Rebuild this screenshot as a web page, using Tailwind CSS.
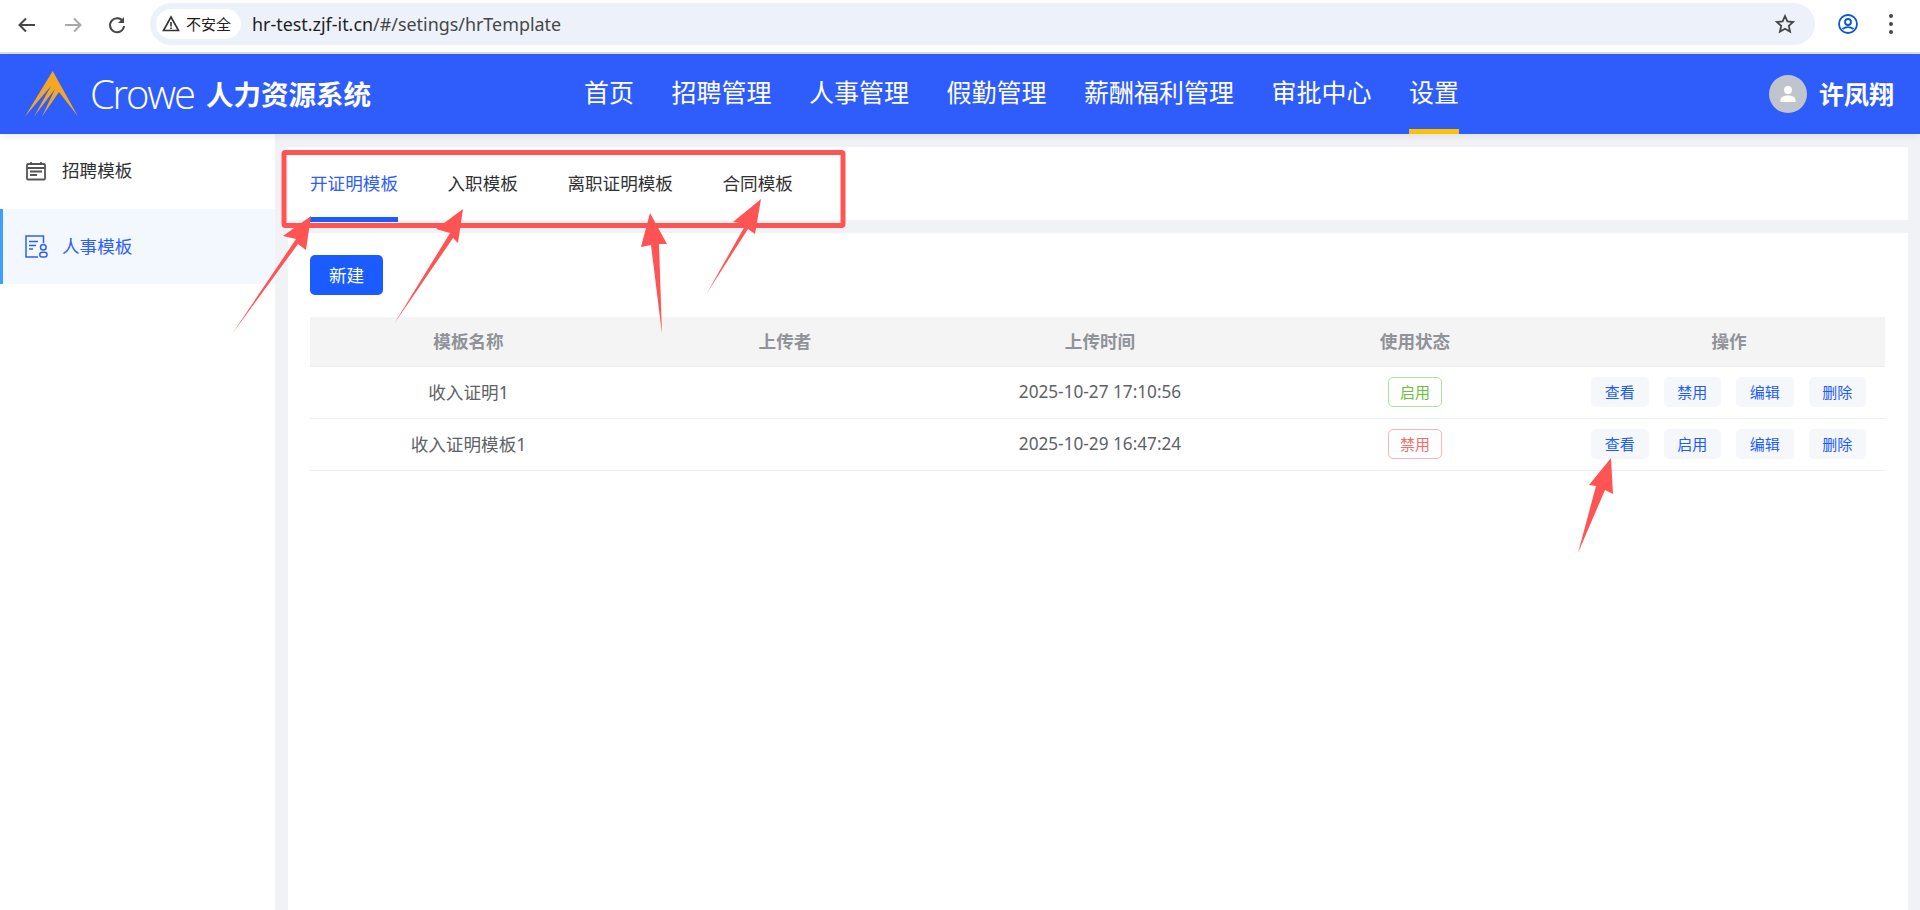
<!DOCTYPE html>
<html lang="zh-CN">
<head>
<meta charset="utf-8">
<title>模板</title>
<script src="https://cdn.jsdelivr.net/npm/@tailwindcss/browser@4"></script>
</head>
<body class="relative h-[910px] w-[1920px] overflow-hidden bg-[#f0f2f5] font-['Noto_Sans','Noto_Sans_CJK_SC',sans-serif]">
<!-- browser bar -->
<div class="flex h-[54px] items-start border-b-2 border-[#dfe1e5] bg-white">
  <div class="flex h-[48px] w-[150px] shrink-0 items-center gap-[20px] pl-[16px] pt-[1px]">
    <svg class="h-[20px] w-[25px]" viewBox="0 0 25 20" fill="none" stroke="#474747" stroke-width="2"><path d="M19 10H4M10 3.500 3.500 10l6.500 6.500"/></svg>
    <svg class="h-[20px] w-[25px]" viewBox="0 0 25 20" fill="none" stroke="#a9a9a9" stroke-width="2"><path d="M4 10h15M13 3.500l6.500 6.500-6.500 6.500"/></svg>
    <svg class="ml-[1px] h-[20px] w-[20px]" viewBox="0 0 20 20" fill="none" stroke="#474747" stroke-width="2"><path d="M16 6.500A7 7 0 1 0 17 11"/><path d="M17 2v6h-6" fill="#474747" stroke="none"/></svg>
  </div>
  <div class="mt-[3px] flex h-[42px] w-[1665px] shrink-0 items-center rounded-full bg-[#edf2fa] pl-[6px] pr-[20px]">
    <div class="flex h-[30px] w-[85px] shrink-0 items-center gap-[6px] rounded-full bg-white pl-[6px]">
      <svg class="h-[18px] w-[18px] shrink-0" viewBox="0 0 18 18" fill="none" stroke="#333" stroke-width="1.600"><path d="M9 2 1.500 15.500h15zM9 7v4.500M9 12.500v1.500"/></svg>
      <span class="text-[15px] leading-none whitespace-nowrap text-[#1f1f1f]">不安全</span>
    </div>
    <div class="ml-[11px] text-[17.900px] whitespace-nowrap text-[#1f1f1f]">hr-test.zjf-it.cn<span class="text-[#444746]">/#/setings/hrTemplate</span></div>
    <svg class="ml-auto h-[20px] w-[20px]" viewBox="0 0 20 20" fill="none" stroke="#474747" stroke-width="1.800"><path d="m10 2 2.400 5.400 5.800.6-4.400 3.900 1.300 5.700L10 14.700l-5.100 2.900 1.300-5.700L1.800 8l5.800-.6z"/></svg>
  </div>
  <div class="flex h-[48px] flex-1 items-center pl-[23px]">
    <svg class="h-[20px] w-[20px]" viewBox="0 0 20 20" fill="none" stroke="#0b57d0" stroke-width="1.800"><circle cx="10" cy="10" r="9"/><circle cx="10" cy="8" r="3"/><path d="M4.500 15c3-2.400 8-2.400 11 0"/></svg>
    <div class="ml-[31px] flex flex-col gap-[4px]"><i class="block h-[4px] w-[4px] rounded-full bg-[#474747]"></i><i class="block h-[4px] w-[4px] rounded-full bg-[#474747]"></i><i class="block h-[4px] w-[4px] rounded-full bg-[#474747]"></i></div>
  </div>
</div>
<!-- app header -->
<header class="relative flex h-[80px] items-center bg-[#2f5dfb] text-white shadow-[0_2px_8px_rgba(0,0,0,0.08)]">
  <div class="flex w-[584px] shrink-0 items-center pl-[25px]">
    <svg class="h-[46px] w-[53px] shrink-0" viewBox="0 0 53 46"><path fill="#f5a623" d="M27.700 0 53 45.500 34 21 17 45.500 30 18 9 45.500 26 15 0 45.500z"/></svg>
    <span class="ml-[12px] w-[104px] text-[40px] leading-none font-light tracking-[-2.200px] whitespace-nowrap font-['Open_Sans',sans-serif]">Crowe</span>
    <span class="ml-[12px] pt-[1px] text-[27.500px] leading-none font-bold whitespace-nowrap">人力资源系统</span>
  </div>
  <nav class="flex h-full items-start gap-[37.500px] text-[25px] whitespace-nowrap">
    <a class="pt-[20px]">首页</a>
    <a class="pt-[20px]">招聘管理</a>
    <a class="pt-[20px]">人事管理</a>
    <a class="pt-[20px]">假勤管理</a>
    <a class="pt-[20px]">薪酬福利管理</a>
    <a class="pt-[20px]">审批中心</a>
    <a class="h-full border-b-[5px] border-[#ffc000] pt-[20px]">设置</a>
  </nav>
  <div class="ml-auto flex items-center gap-[12px] pr-[26px]">
    <div class="flex h-[38px] w-[38px] items-center justify-center rounded-full bg-[#c0c4cc]">
      <svg class="h-[18px] w-[18px]" viewBox="0 0 18 18" fill="#fff"><circle cx="9" cy="5" r="4"/><path d="M1.500 17v-2c0-3 3-4.500 7.500-4.500s7.500 1.500 7.500 4.500v2z"/></svg>
    </div>
    <span class="text-[25px] leading-none font-bold whitespace-nowrap">许凤翔</span>
  </div>
</header>
<!-- body -->
<div class="flex h-[776px]">
  <aside class="w-[275px] shrink-0 bg-white text-[17.6px]">
    <div class="flex h-[75px] items-center pl-[26px] text-[#303133]">
      <svg class="mb-[2px] h-[20px] w-[20px]" viewBox="0 0 20 20" fill="none" stroke="#555" stroke-width="1.800"><rect x="1" y="3" width="18" height="15.500" rx="1"/><path d="M1 7h18M5 1v3M15 1v3M4 10.500h12M4 14h7"/></svg>
      <span class="mb-[2px] ml-[16px]">招聘模板</span>
    </div>
    <div class="flex h-[75px] items-center border-l-[3px] border-[#409eff] bg-[#f3f8ff] pl-[22px] text-[#2f5dfb]">
      <svg class="h-[23px] w-[23px]" viewBox="0 0 23 23" fill="none" stroke="#2f5dfb" stroke-width="1.500"><path d="M18.500 8V1H1v21h12"/><path d="M4 6.500h9M4 10.500h7M4 14h4"/><circle cx="18.300" cy="12.300" r="2.800"/><rect x="14.800" y="17.300" width="7.200" height="4.700" rx="2.300"/></svg>
      <span class="mb-[1px] ml-[14px]">人事模板</span>
    </div>
  </aside>
  <main class="flex min-w-0 flex-1 flex-col gap-[13px] pt-[13px] pr-[12px] pl-[13px]">
    <div class="flex h-[73px] gap-[49.500px] bg-white pl-[22px] text-[17.6px] text-[#303133]">
      <a class="h-[75px] border-b-[5px] border-[#1a5cff] pt-[23px] text-[#2f5dfb]">开证明模板</a>
      <a class="pt-[23px]">入职模板</a>
      <a class="pt-[23px]">离职证明模板</a>
      <a class="pt-[23px]">合同模板</a>
    </div>
    <div class="flex-1 bg-white px-[22px] pt-[22px]">
      <button class="h-[40px] w-[73px] rounded-[5px] bg-[#1a5cff] text-[17.6px] text-white">新建</button>
      <table class="mt-[22px] w-[1575px] table-fixed border-collapse text-center text-[17.6px] text-[#606266]">
        <colgroup><col class="w-[317px]"><col class="w-[316px]"><col class="w-[314px]"><col class="w-[316px]"><col class="w-[312px]"></colgroup>
        <thead>
          <tr class="h-[49px] bg-[#f4f4f5] text-[#909399]">
            <th class="font-bold">模板名称</th><th class="font-bold">上传者</th><th class="font-bold">上传时间</th><th class="font-bold">使用状态</th><th class="font-bold">操作</th>
          </tr>
        </thead>
        <tbody>
          <tr class="h-[52px] border-y border-[#ebeef5]">
            <td>收入证明1</td><td></td><td class="text-[17.200px]">2025-10-27 17:10:56</td>
            <td><span class="inline-flex h-[30px] w-[54px] items-center justify-center rounded-[5px] border border-[#b3e19d] text-[15px] text-[#67c23a]">启用</span></td>
            <td><div class="flex justify-center gap-[15px] pr-[1px] text-[15px] text-[#1a5cff]">
              <a class="flex h-[30px] w-[57.500px] items-center justify-center rounded-[5px] bg-[#f5f7fb]">查看</a><a class="flex h-[30px] w-[57.500px] items-center justify-center rounded-[5px] bg-[#f5f7fb]">禁用</a><a class="flex h-[30px] w-[57.500px] items-center justify-center rounded-[5px] bg-[#f5f7fb]">编辑</a><a class="flex h-[30px] w-[57.500px] items-center justify-center rounded-[5px] bg-[#f5f7fb]">删除</a>
            </div></td>
          </tr>
          <tr class="h-[52px] border-b border-[#ebeef5]">
            <td>收入证明模板1</td><td></td><td class="text-[17.200px]">2025-10-29 16:47:24</td>
            <td><span class="inline-flex h-[30px] w-[54px] items-center justify-center rounded-[5px] border border-[#fab6b6] text-[15px] text-[#f56c6c]">禁用</span></td>
            <td><div class="flex justify-center gap-[15px] pr-[1px] text-[15px] text-[#1a5cff]">
              <a class="flex h-[30px] w-[57.500px] items-center justify-center rounded-[5px] bg-[#f5f7fb]">查看</a><a class="flex h-[30px] w-[57.500px] items-center justify-center rounded-[5px] bg-[#f5f7fb]">启用</a><a class="flex h-[30px] w-[57.500px] items-center justify-center rounded-[5px] bg-[#f5f7fb]">编辑</a><a class="flex h-[30px] w-[57.500px] items-center justify-center rounded-[5px] bg-[#f5f7fb]">删除</a>
            </div></td>
          </tr>
        </tbody>
      </table>
    </div>
  </main>
</div>
<!-- annotations drawn over the screenshot -->
<svg class="pointer-events-none absolute inset-0 h-[910px] w-[1920px]" viewBox="0 0 1920 910" fill="#ff5454">
  <rect x="284" y="152.500" width="559" height="73" rx="1.500" fill="none" stroke="#ff5454" stroke-width="5"/>
  <polygon points="232,334 296,239 283,236 311,216 306,250 298,244"/>
  <polygon points="394,324 450,233 436,229 463,209 458,243 453,238"/>
  <polygon points="662,334 651,245 641,247 650,213 667,244 659,244"/>
  <polygon points="707,293 746,224 733,222 761,199 755,234 748,229"/>
  <polygon points="1578,553 1596,486 1589,485 1611,458 1613,494 1605,490"/>
</svg>
</body>
</html>
